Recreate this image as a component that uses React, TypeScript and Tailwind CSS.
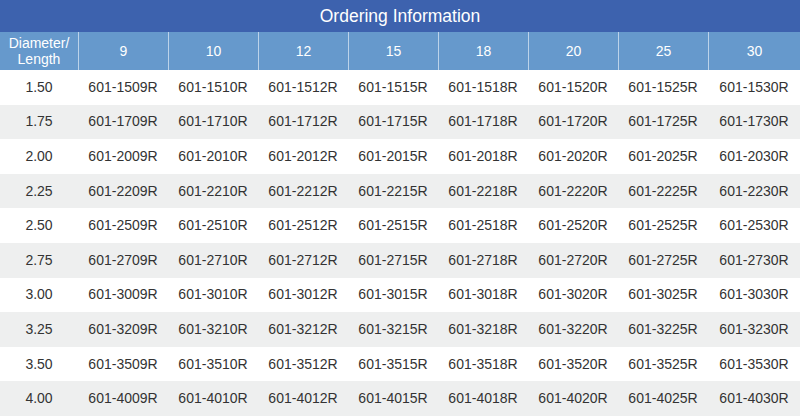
import React from "react";

const diams = ["1.50", "1.75", "2.00", "2.25", "2.50", "2.75", "3.00", "3.25", "3.50", "4.00"];
const lens = ["09", "10", "12", "15", "18", "20", "25", "30"];

export default function App() {
  return (
    <div
      className="w-[800px] h-[416px] flex flex-col bg-white overflow-hidden"
      style={{ fontFamily: '"Liberation Sans", Arial, sans-serif' }}
    >
      <div className="h-[32px] shrink-0 bg-[#3d62ae] text-white text-[17.5px] flex items-center justify-center">
        Ordering Information
      </div>
      <div className="h-[38px] shrink-0 bg-[#6699cc] text-white text-[14px] grid grid-cols-[78px_repeat(7,90px)_1fr]">
        <div className="flex flex-col items-center justify-center leading-[16px]">
          <span>Diameter/</span>
          <span>Length</span>
        </div>
        {lens.map((l) => (
          <div key={l} className="flex items-center justify-center border-l-[1.5px] border-[#bcd3ea]">
            {String(parseInt(l, 10))}
          </div>
        ))}
      </div>
      <div className="flex-1 flex flex-col">
        {diams.map((d, i) => (
          <div
            key={d}
            className={`flex-1 grid grid-cols-[78px_repeat(7,90px)_1fr] text-[14px] text-[#333333] ${
              i % 2 === 1 ? "bg-[#eeefef]" : "bg-white"
            }`}
          >
            <div className="flex items-center justify-center">{d}</div>
            {lens.map((l) => (
              <div key={l} className="flex items-center justify-center">
                {`601-${d.replace(".", "").slice(0, 2)}${l}R`}
              </div>
            ))}
          </div>
        ))}
      </div>
    </div>
  );
}
